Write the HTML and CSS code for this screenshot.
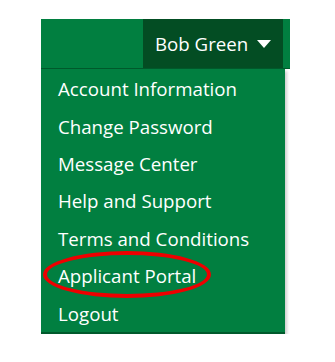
FILE: index.html
```html
<!DOCTYPE html>
<html>
<head>
  <meta charset="utf-8">
  <meta name="viewport" content="width=device-width">
  <title>User menu</title>
  <link rel="stylesheet" href="styles.css">
</head>
<body>

  <div class="nav">
    <div class="topbar">
      <div class="spacer"></div>
      <a class="user-toggle" href="#">Bob Green <span class="caret"></span></a>
    </div>

    <ul class="dropdown">
      <li><a href="#">Account Information</a></li>
      <li><a href="#">Change Password</a></li>
      <li><a href="#">Message Center</a></li>
      <li><a href="#">Help and Support</a></li>
      <li><a href="#">Terms and Conditions</a></li>
      <li class="circled"><a href="#">Applicant Portal</a></li>
      <li><a href="#">Logout</a></li>
    </ul>
  </div>

</body>
</html>
```

FILE: styles.css
```css
html, body {
  margin: 0;
  padding: 0;
  background: #fff;
  font-family: "Open Sans", "Noto Sans", sans-serif;
}

.nav {
  padding: 19px 0 0 41px;
  width: 249px;
}

.topbar {
  display: flex;
  height: 49px;
  background: #017f40;
  border-bottom: 1px solid #015a2c;
}

.spacer {
  width: 102px;
}

.user-toggle {
  display: flex;
  align-items: center;
  width: 140px;
  padding-left: 12px;
  box-sizing: border-box;
  background: #034d23;
  color: #fff;
  font-size: 18.7px;
  text-decoration: none;
}

.caret {
  display: inline-block;
  margin-left: 9px;
  width: 0;
  height: 0;
  border-left: 7px solid transparent;
  border-right: 7px solid transparent;
  border-top: 8px solid #fff;
}

.dropdown {
  list-style: none;
  margin: 0;
  padding: 1px 0 0 0;
  width: 244px;
  background: #017f40;
  border-bottom: 2px solid #015a2c;
  box-shadow: 2px 2px 3px rgba(0,0,0,0.2);
}

.dropdown li {
  height: 37.4px;
  display: flex;
  align-items: center;
}

.dropdown a {
  display: block;
  padding-left: 17px;
  color: #fff;
  font-size: 18.7px;
  text-decoration: none;
}

.circled {
  position: relative;
}

.circled::after {
  content: "";
  position: absolute;
  left: 2px;
  top: -6px;
  width: 160px;
  height: 39px;
  border: 4px solid #ee0000;
  border-radius: 50%;
}
```
